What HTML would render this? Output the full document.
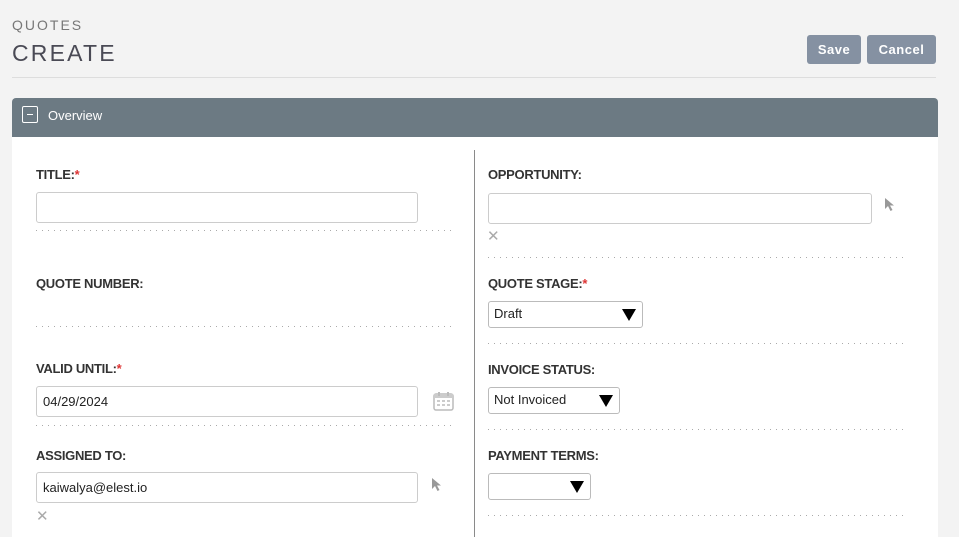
<!DOCTYPE html>
<html><head><style>
body{margin:0;width:959px;height:537px;background:#f3f3f3;font-family:"Liberation Sans",sans-serif;position:relative;overflow:hidden;color:#333}
.a{position:absolute}
.t1{left:12px;top:17px;font-size:14px;letter-spacing:2px;color:#777}
.t2{left:12px;top:40px;font-size:23px;letter-spacing:2.2px;color:#4a4a55}
.btn{background:#8591a2;color:#fff;font-weight:bold;font-size:13px;border-radius:3px;text-align:center;line-height:29px;height:29px;top:35px;letter-spacing:.5px}
.hr{left:12px;top:77px;width:924px;height:1px;background:#ddd}
.bar{left:12px;top:98px;width:926px;height:39px;background:#6c7a83;border-radius:4px 4px 0 0;color:#fff;font-size:13px}
.panel{left:12px;top:137px;width:926px;height:400px;background:#fff}
.vl{left:474px;top:150px;width:1px;height:387px;background:#8a8a8a}
.lbl{font-size:13px;font-weight:bold;color:#333;letter-spacing:-.3px}
.lbl i{color:#d33;font-style:normal}
.in{border:1px solid #ccc;border-radius:3px;background:#fff;box-sizing:border-box;font-size:13px;color:#222;padding-left:6px;line-height:29px}
.dot{height:1px;background:repeating-linear-gradient(90deg,#aaa 0 1px,transparent 1px 6px)}
.sel{border:1px solid #bbb;border-radius:3px;box-sizing:border-box;font-size:13px;color:#222;padding-left:5px;line-height:24px}
.sel b{position:absolute;right:6px;top:7px;width:0;height:0;border-left:7px solid transparent;border-right:7px solid transparent;border-top:12px solid #000}
.x{color:#aaa;font-size:15px}
</style></head><body>
<div class="a t1">QUOTES</div>
<div class="a t2">CREATE</div>
<div class="a btn" style="left:807px;width:54px">Save</div>
<div class="a btn" style="left:867px;width:69px">Cancel</div>
<div class="a hr"></div>
<div class="a bar"><div class="a" style="left:10px;top:8px;width:16px;height:17px;border:1px solid #fff;border-radius:2px;box-sizing:border-box"><div class="a" style="left:4px;top:7px;width:6px;height:1px;background:#fff"></div></div><div class="a" style="left:36px;top:10px">Overview</div></div>
<div class="a panel"></div>
<div class="a vl"></div>

<div class="a lbl" style="left:36px;top:167px">TITLE:<i>*</i></div>
<div class="a in" style="left:36px;top:192px;width:382px;height:31px"></div>
<div class="a dot" style="left:36px;top:230px;width:416px"></div>

<div class="a lbl" style="left:36px;top:276px">QUOTE NUMBER:</div>
<div class="a dot" style="left:36px;top:326px;width:416px"></div>

<div class="a lbl" style="left:36px;top:361px">VALID UNTIL:<i>*</i></div>
<div class="a in" style="left:36px;top:386px;width:382px;height:31px">04/29/2024</div>
<svg class="a" style="left:433px;top:391px" width="21" height="20" viewBox="0 0 21 20"><rect x="1" y="3" width="19" height="16" rx="2" fill="none" stroke="#bbb" stroke-width="1.5"/><rect x="1" y="3" width="19" height="4" fill="#ccc"/><rect x="5" y="1" width="2" height="4" fill="#bbb"/><rect x="14" y="1" width="2" height="4" fill="#bbb"/><g fill="#ccc"><rect x="4" y="9" width="3" height="2"/><rect x="9" y="9" width="3" height="2"/><rect x="14" y="9" width="3" height="2"/><rect x="4" y="13" width="3" height="2"/><rect x="9" y="13" width="3" height="2"/><rect x="14" y="13" width="3" height="2"/></g></svg>
<div class="a dot" style="left:36px;top:425px;width:416px"></div>

<div class="a lbl" style="left:36px;top:448px">ASSIGNED TO:</div>
<div class="a in" style="left:36px;top:472px;width:382px;height:31px">kaiwalya@elest.io</div>
<svg class="a" style="left:431px;top:477px" width="12" height="16" viewBox="0 0 12 16"><path d="M1 1L1 12L4 9L6.5 14L8.5 13L6 8.5L10 8.5Z" fill="#999"/></svg>
<div class="a x" style="left:36px;top:507px">✕</div>

<div class="a lbl" style="left:488px;top:167px">OPPORTUNITY:</div>
<div class="a in" style="left:488px;top:193px;width:384px;height:31px"></div>
<svg class="a" style="left:884px;top:197px" width="12" height="16" viewBox="0 0 12 16"><path d="M1 1L1 12L4 9L6.5 14L8.5 13L6 8.5L10 8.5Z" fill="#999"/></svg>
<div class="a x" style="left:487px;top:227px">✕</div>
<div class="a dot" style="left:488px;top:257px;width:417px"></div>

<div class="a lbl" style="left:488px;top:276px">QUOTE STAGE:<i>*</i></div>
<div class="a sel" style="left:488px;top:301px;width:155px;height:27px">Draft<b></b></div>
<div class="a dot" style="left:488px;top:343px;width:417px"></div>

<div class="a lbl" style="left:488px;top:362px">INVOICE STATUS:</div>
<div class="a sel" style="left:488px;top:387px;width:132px;height:27px">Not Invoiced<b></b></div>
<div class="a dot" style="left:488px;top:429px;width:417px"></div>

<div class="a lbl" style="left:488px;top:448px">PAYMENT TERMS:</div>
<div class="a sel" style="left:488px;top:473px;width:103px;height:27px"><b></b></div>
<div class="a dot" style="left:488px;top:515px;width:417px"></div>
</body></html>
